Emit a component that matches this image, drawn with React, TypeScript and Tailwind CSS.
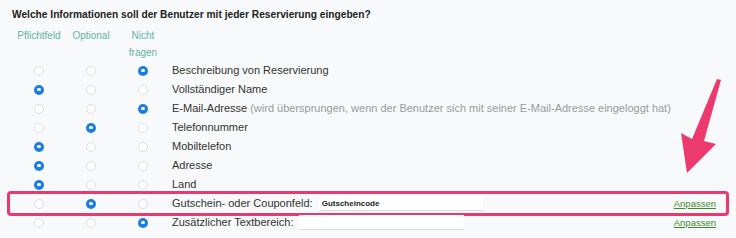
import React from "react";

type Choice = "req" | "opt" | "no";

interface Field {
  label: string;
  note?: string;
  choice: Choice;
  input?: { value: string; width: string };
  highlight?: boolean;
  custom?: boolean;
}

const fields: Field[] = [
  { label: "Beschreibung von Reservierung", choice: "no" },
  { label: "Vollständiger Name", choice: "req" },
  {
    label: "E-Mail-Adresse",
    note: "(wird übersprungen, wenn der Benutzer sich mit seiner E-Mail-Adresse eingeloggt hat)",
    choice: "no",
  },
  { label: "Telefonnummer", choice: "opt" },
  { label: "Mobiltelefon", choice: "req" },
  { label: "Adresse", choice: "req" },
  { label: "Land", choice: "req" },
  {
    label: "Gutschein- oder Couponfeld:",
    choice: "opt",
    input: { value: "Gutscheincode", width: "w-[164px]" },
    highlight: true,
    custom: true,
  },
  {
    label: "Zusätzlicher Textbereich:",
    choice: "no",
    input: { value: "", width: "w-[165px]" },
    custom: true,
  },
];

function Radio({ checked }: { checked: boolean }) {
  return (
    <div className="flex justify-center">
      {checked ? (
        <span className="flex h-[10px] w-[10px] items-center justify-center rounded-full bg-[#1a7de2]">
          <span className="h-[3.5px] w-[3.5px] rounded-full bg-white" />
        </span>
      ) : (
        <span className="h-[10px] w-[10px] rounded-full border border-[#dcdee0] bg-white" />
      )}
    </div>
  );
}

export default function App() {
  return (
    <div
      className="relative h-[238px] w-[736px] overflow-hidden bg-[#f8f9fa] text-[#333]"
      style={{ fontFamily: "Helvetica, 'Liberation Sans', Arial, sans-serif" }}
    >
      <h2 className="pl-[12px] pt-[8px] text-[10.2px] font-bold leading-[13px] text-[#222]">
        Welche Informationen soll der Benutzer mit jeder Reservierung eingeben?
      </h2>

      {/* column headers */}
      <div className="mt-[6px] grid grid-cols-[52px_52px_52px] pl-[13px] text-center text-[10px] leading-[17px] text-[#62b3a9]">
        <div>Pflichtfeld</div>
        <div>Optional</div>
        <div>
          Nicht
          <br />
          fragen
        </div>
      </div>

      <div className="flex flex-col">
        {fields.map((f) => (
          <div key={f.label} className="relative">
            {f.highlight && (
              <div className="pointer-events-none absolute inset-x-[7px] -inset-y-[3px] rounded-[4px] border-[3px] border-[#e9396d]" />
            )}
            <div className="grid h-[19px] grid-cols-[52px_52px_52px_1fr] items-center pl-[13px] pr-[20px]">
              <Radio checked={f.choice === "req"} />
              <Radio checked={f.choice === "opt"} />
              <Radio checked={f.choice === "no"} />
              <div className="flex items-center pl-[3px] text-[11px] leading-[19px]">
                <span className="whitespace-nowrap">{f.label}</span>
                {f.note && (
                  <span className="ml-[3px] whitespace-nowrap text-[#9a9a9a]">{f.note}</span>
                )}
                {f.input && (
                  <input
                    readOnly
                    value={f.input.value}
                    className={`ml-[6px] h-[15px] ${f.input.width} border-b border-[#dcdcdc] bg-white px-[3px] text-[8px] font-bold text-[#222] outline-none`}
                  />
                )}
                {f.custom && (
                  <a
                    href="#"
                    className="ml-auto text-[9.5px] text-[#3b8a2c] underline"
                  >
                    Anpassen
                  </a>
                )}
              </div>
            </div>
          </div>
        ))}
      </div>

      {/* annotation arrow */}
      <svg
        className="pointer-events-none absolute left-0 top-0"
        width="736"
        height="238"
        viewBox="0 0 736 238"
      >
        <polygon
          points="717,79 721,80 704,141 716,144 687,173 681,133 692,139"
          fill="#ec3a6e"
        />
      </svg>
    </div>
  );
}
